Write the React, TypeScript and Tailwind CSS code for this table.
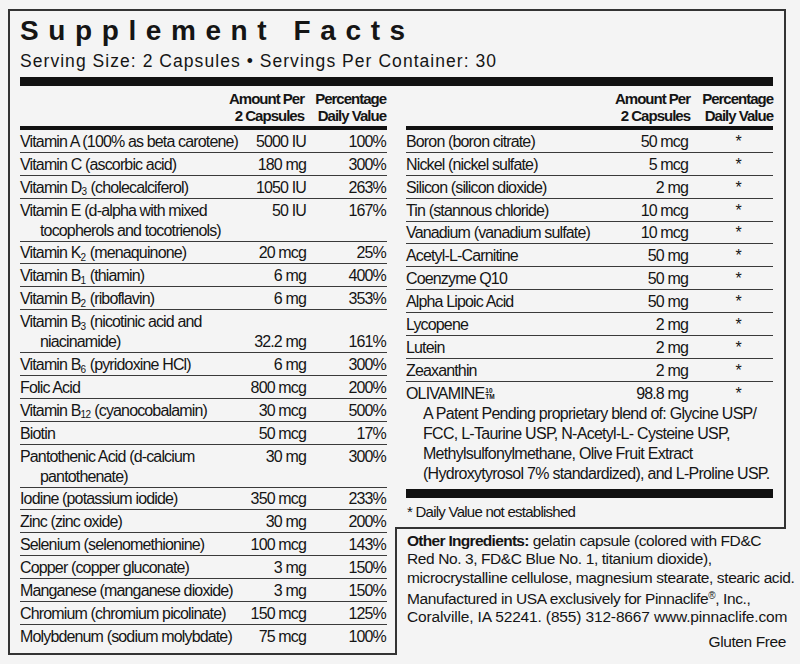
import React from "react";

type Row = {
  label: React.ReactNode;
  cont?: React.ReactNode;
  amt: string;
  pct: string;
  second?: boolean;
};

const left: Row[] = [
  { label: "Vitamin A (100% as beta carotene)", amt: "5000 IU", pct: "100%" },
  { label: "Vitamin C (ascorbic acid)", amt: "180 mg", pct: "300%" },
  { label: <>Vitamin D<sub className="text-[10px] tracking-normal">3</sub> (cholecalciferol)</>, amt: "1050 IU", pct: "263%" },
  { label: "Vitamin E (d-alpha with mixed", cont: "tocopherols and tocotrienols)", amt: "50 IU", pct: "167%" },
  { label: <>Vitamin K<sub className="text-[10px] tracking-normal">2</sub> (menaquinone)</>, amt: "20 mcg", pct: "25%" },
  { label: <>Vitamin B<sub className="text-[10px] tracking-normal">1</sub> (thiamin)</>, amt: "6 mg", pct: "400%" },
  { label: <>Vitamin B<sub className="text-[10px] tracking-normal">2</sub> (riboflavin)</>, amt: "6 mg", pct: "353%" },
  { label: <>Vitamin B<sub className="text-[10px] tracking-normal">3</sub> (nicotinic acid and</>, cont: "niacinamide)", amt: "32.2 mg", pct: "161%", second: true },
  { label: <>Vitamin B<sub className="text-[10px] tracking-normal">6</sub> (pyridoxine HCl)</>, amt: "6 mg", pct: "300%" },
  { label: "Folic Acid", amt: "800 mcg", pct: "200%" },
  { label: <>Vitamin B<sub className="text-[10px] tracking-[-0.5px]">12</sub> (cyanocobalamin)</>, amt: "30 mcg", pct: "500%" },
  { label: "Biotin", amt: "50 mcg", pct: "17%" },
  { label: "Pantothenic Acid (d-calcium", cont: "pantothenate)", amt: "30 mg", pct: "300%" },
  { label: "Iodine (potassium iodide)", amt: "350 mcg", pct: "233%" },
  { label: "Zinc (zinc oxide)", amt: "30 mg", pct: "200%" },
  { label: "Selenium (selenomethionine)", amt: "100 mcg", pct: "143%" },
  { label: "Copper (copper gluconate)", amt: "3 mg", pct: "150%" },
  { label: "Manganese (manganese dioxide)", amt: "3 mg", pct: "150%" },
  { label: "Chromium (chromium picolinate)", amt: "150 mcg", pct: "125%" },
  { label: "Molybdenum (sodium molybdate)", amt: "75 mcg", pct: "100%" },
];

const right: Row[] = [
  { label: "Boron (boron citrate)", amt: "50 mcg", pct: "*" },
  { label: "Nickel (nickel sulfate)", amt: "5 mcg", pct: "*" },
  { label: "Silicon (silicon dioxide)", amt: "2 mg", pct: "*" },
  { label: "Tin (stannous chloride)", amt: "10 mcg", pct: "*" },
  { label: "Vanadium (vanadium sulfate)", amt: "10 mcg", pct: "*" },
  { label: "Acetyl-L-Carnitine", amt: "50 mg", pct: "*" },
  { label: "Coenzyme Q10", amt: "50 mg", pct: "*" },
  { label: "Alpha Lipoic Acid", amt: "50 mg", pct: "*" },
  { label: "Lycopene", amt: "2 mg", pct: "*" },
  { label: "Lutein", amt: "2 mg", pct: "*" },
  { label: "Zeaxanthin", amt: "2 mg", pct: "*" },
];

function ColHead({ pr }: { pr: string }) {
  return (
    <div className="flex justify-end border-b-4 border-[#111] pt-[4px] pb-[2px] text-[15px] font-bold leading-[17px] tracking-[-1px]">
      <div className="text-right whitespace-nowrap">
        Amount Per
        <br />2 Capsules
      </div>
      <div className={`w-[83px] text-right whitespace-nowrap ${pr}`}>
        Percentage
        <br />
        Daily Value
      </div>
    </div>
  );
}

export default function App() {
  return (
    <div className="w-[800px] h-[664px] bg-[#f4f4f4] text-[#151515] pl-[8px] pt-[9px] font-['Liberation_Sans',Arial,sans-serif]">
      <div className="w-[778px] flex flex-col">
        {/* header */}
        <div className="border-t-2 border-x-2 border-[#333] pl-[10px] pr-[11px] pt-[6px]">
          <div className="font-bold text-[28px] leading-[28px] tracking-[9.6px] whitespace-nowrap">
            Supplement Facts
          </div>
          <div className="mt-[6px] text-[17.5px] leading-[20px] tracking-[1.05px] whitespace-nowrap">
            Serving Size: 2 Capsules • Servings Per Container: 30
          </div>
          <div className="mt-[6px] h-[9px] bg-[#111]" />
        </div>

        <div className="flex">
          {/* left column */}
          <div className="w-[387px] shrink-0 border-l-2 border-b-2 border-[#333] pl-[10px] pr-[8px] text-[16px] tracking-[-0.85px]">
            <ColHead pr="pr-[1px]" />
            {left.map((r, i) => (
              <div
                key={i}
                className={`grid grid-cols-[225px_62px_80px] pt-[1.9px] leading-[20px] ${
                  i === left.length - 1 ? "pb-[6px]" : "border-b border-[#3a3a3a]"
                }`}
              >
                <div className="whitespace-nowrap">
                  <div>{r.label}</div>
                  {r.cont && <div className="pl-[20px]">{r.cont}</div>}
                </div>
                <div className={`text-right pr-[1px] whitespace-nowrap ${r.second ? "self-end" : ""}`}>{r.amt}</div>
                <div className={`text-right pr-[1px] whitespace-nowrap ${r.second ? "self-end" : ""}`}>{r.pct}</div>
              </div>
            ))}
          </div>

          {/* right column */}
          <div className="w-[391px] min-w-0 shrink-0 flex flex-col">
            <div className="border-r-2 border-b-2 border-[#333] pl-[11px] pr-[11px] pb-[6px] text-[16px] tracking-[-0.85px]">
              <ColHead pr="pr-0" />
              {right.map((r, i) => (
                <div key={i} className="grid grid-cols-[200px_82px_85px] pt-[1.9px] leading-[20px] border-b border-[#3a3a3a]">
                  <div className="whitespace-nowrap">{r.label}</div>
                  <div className="text-right whitespace-nowrap">{r.amt}</div>
                  <div className="text-right pr-[32px]">{r.pct}</div>
                </div>
              ))}
              <div className="grid grid-cols-[200px_82px_85px] pt-[1.9px] leading-[20px]">
                <div className="whitespace-nowrap">
                  OLIVAMINE
                  <span className="inline-block align-baseline text-[6.5px] leading-[5.5px] font-bold tracking-normal ml-[1px]">
                    <span className="block">10</span>
                    <span className="block">TM</span>
                  </span>
                </div>
                <div className="text-right whitespace-nowrap">98.8 mg</div>
                <div className="text-right pr-[32px]">*</div>
              </div>
              <div className="pl-[17px] leading-[20px] tracking-[-0.72px] whitespace-nowrap">
                A Patent Pending proprietary blend of: Glycine USP/
                <br />
                FCC, L-Taurine USP, N-Acetyl-L- Cysteine USP,
                <br />
                Methylsulfonylmethane, Olive Fruit Extract
                <br />
                (Hydroxytyrosol 7% standardized), and L-Proline USP.
              </div>
              <div className="mt-[5px] h-[9px] bg-[#111]" />
              <div className="mt-[5px] text-[15px] leading-[18px] tracking-[-0.75px] pl-[1px] whitespace-nowrap">
                * Daily Value not established
              </div>
            </div>

            <div className="flex-1 border-l-2 border-[#333] pl-[10px] pt-[3px] text-[15.5px] leading-[18.5px] tracking-[-0.4px] whitespace-nowrap">
              <div>
                <span className="font-bold tracking-[-0.7px]">Other Ingredients:</span> gelatin capsule (colored with FD&amp;C
                <br />
                Red No. 3, FD&amp;C Blue No. 1, titanium dioxide),
                <br />
                microcrystalline cellulose, magnesium stearate, stearic acid.
              </div>
              <div className="mt-[2.5px]">
                Manufactured in USA exclusively for Pinnaclife<sup className="text-[10px]">®</sup>, Inc.,
                <br />
                <span className="tracking-[-0.15px]">Coralville, IA 52241. (855) 312-8667 www.pinnaclife.com</span>
              </div>
              <div className="mt-[6px] text-right">Gluten Free</div>
            </div>
          </div>
        </div>
      </div>
    </div>
  );
}
